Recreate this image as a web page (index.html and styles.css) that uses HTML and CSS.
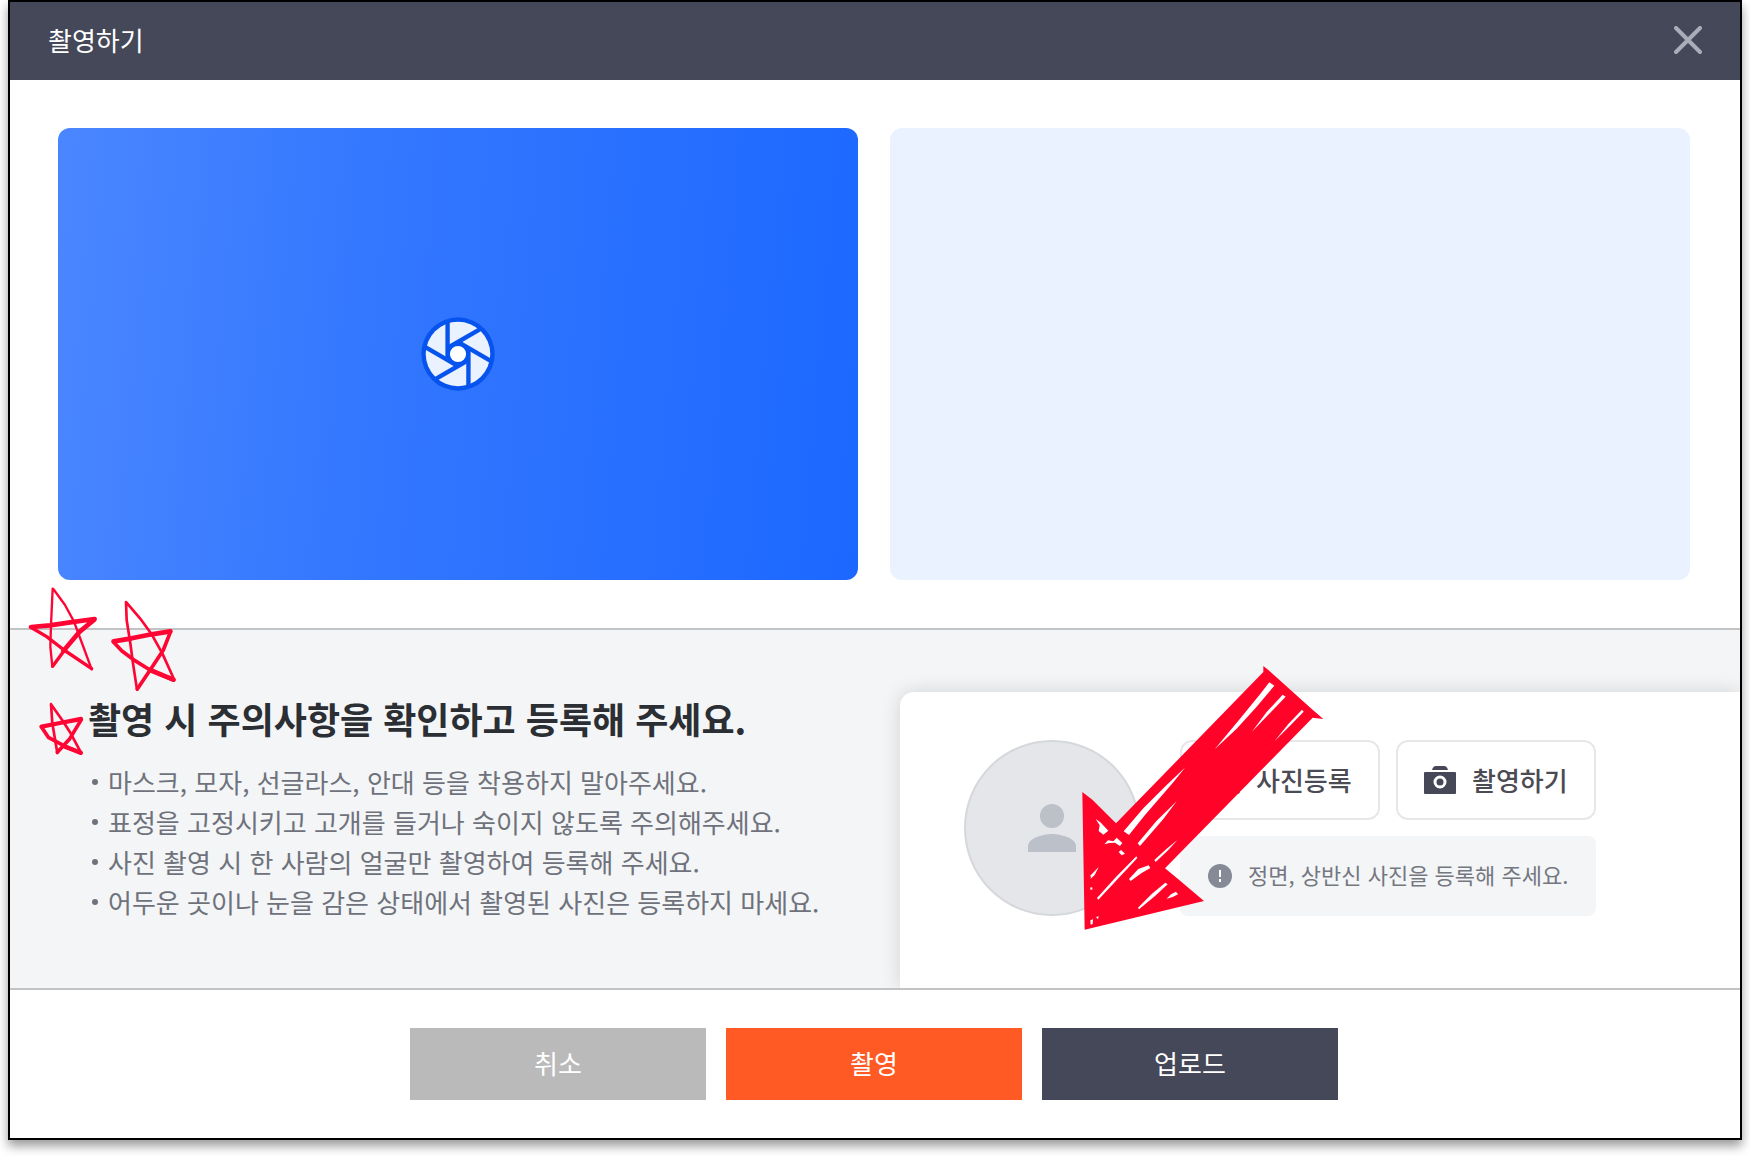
FILE: index.html
```html
<!DOCTYPE html>
<html lang="ko">
<head>
    <meta charset="UTF-8">
    <meta name="viewport" content="width=device-width, initial-scale=1.0">
    <title>촬영하기</title>
    <link rel="stylesheet" href="styles.css">
</head>
<body>
    <div class="modal">
        <header class="modal-header">
            <h1 class="modal-title">촬영하기</h1>
            <button class="close-btn" type="button" aria-label="닫기">
                <svg width="28" height="28" viewBox="0 0 28 28"><path d="M2 2L26 26M26 2L2 26"/></svg>
            </button>
        </header>

        <div class="preview">
            <div class="preview-box camera">
                <svg class="aperture" viewBox="-110 -110 220 220">
                    <circle r="109" fill="#0653ee"/>
                    <circle r="96" fill="#eaf1ff"/>
                    <g stroke="#0653ee" stroke-width="13">
                        <path d="M-31 -97V18"/>
                        <path d="M-31 -97V18" transform="rotate(60)"/>
                        <path d="M-31 -97V18" transform="rotate(120)"/>
                        <path d="M-31 -97V18" transform="rotate(180)"/>
                        <path d="M-31 -97V18" transform="rotate(240)"/>
                        <path d="M-31 -97V18" transform="rotate(300)"/>
                    </g>
                    <circle r="29" fill="#fff" stroke="#0653ee" stroke-width="10"/>
                </svg>
            </div>
            <div class="preview-box result"></div>
        </div>

        <section class="notice">
            <div class="notice-text">
                <h2>촬영 시 주의사항을 확인하고 등록해 주세요.</h2>
                <ul>
                    <li>마스크, 모자, 선글라스, 안대 등을 착용하지 말아주세요.</li>
                    <li>표정을 고정시키고 고개를 들거나 숙이지 않도록 주의해주세요.</li>
                    <li>사진 촬영 시 한 사람의 얼굴만 촬영하여 등록해 주세요.</li>
                    <li>어두운 곳이나 눈을 감은 상태에서 촬영된 사진은 등록하지 마세요.</li>
                </ul>
            </div>

            <div class="card">
                <div class="avatar">
                    <svg width="72" height="72" viewBox="0 0 24 24"><circle cx="12" cy="8" r="4"/><path d="M4 20V18C4 15.3 9.3 14 12 14S20 15.3 20 18V20Z"/></svg>
                </div>
                <div class="card-body">
                    <div class="card-buttons">
                        <button class="outline-btn" type="button">
                            <svg width="32" height="28" viewBox="0 0 32 28"><path fill-rule="evenodd" d="M3 0H29A3 3 0 0 1 32 3V25A3 3 0 0 1 29 28H3A3 3 0 0 1 0 25V3A3 3 0 0 1 3 0ZM5 23H27L20 12L14 19L10 15Z"/></svg>
                            사진등록
                        </button>
                        <button class="outline-btn" type="button">
                            <svg width="32" height="28" viewBox="0 0 32 28"><path d="M8 4Q9 0 12 0H20Q23 0 24 4Z"/><rect y="6" width="32" height="22" rx="1"/><circle cx="16" cy="16" r="5" stroke="#fff" stroke-width="3"/></svg>
                            촬영하기
                        </button>
                    </div>
                    <p class="hint">
                        <svg width="24" height="24" viewBox="0 0 24 24"><circle cx="12" cy="12" r="12" fill="#858a96"/><path d="M12 6V13M12 15V18" stroke="#fff" stroke-width="2"/></svg>
                        <span>정면, 상반신 사진을 등록해 주세요.</span>
                    </p>
                </div>

                <!-- hand-drawn arrow pointing at the shoot button -->
                <svg class="arrow" width="245" height="265" viewBox="60 45 735 795">
                    <path fill="#ff0329" d="M610 48L625 60L756 178L790 207L758 203L315 655L355 688L432 753L74 839L67 426L98 450L168 520L610 66Z"/>
                    <g fill="#fff">
                        <path d="M628 97L643 107L590 170L530 236L464 298L540 206L600 133Z"/>
                        <path d="M668 134L677 140L630 189L575 246L620 186Z"/>
                        <path d="M726 179L731 185L690 227L644 273L685 222Z"/>
                        <path d="M376 352L340 397L255 495L207 555L191 544L250 475L320 405Z"/>
                        <path d="M350 454L310 507L240 588L233 580L290 512Z"/>
                        <path d="M352 570L325 600L287 636L283 630L320 596Z"/>
                        <path d="M107 507L121 517L145 542L130 554L116 543L119 526Z"/>
                        <path d="M133 583L144 571L160 574L170 563L187 579L180 588L165 578L148 579Z"/>
                        <path d="M176 606L183 600L195 611L185 616Z"/>
                        <path d="M229 619L232 624L115 749L111 744L165 684Z"/>
                        <path d="M266 646L271 654L245 669L212 693L207 687L235 657Z"/>
                        <path d="M316 698L323 703L285 738L237 778L234 773L275 732Z"/>
                        <path d="M348 725L354 733L338 741L320 746L333 733Z"/>
                        <path d="M116 651L92 676V686L104 675Z"/>
                        <path d="M91 811L99 808L98 822L92 824ZM108 801L116 799L114 808Z"/>
                        <path d="M91 712L97 712L97 719L91 719Z"/>
                    </g>
                </svg>
            </div>

            <svg class="stars" width="160" height="178" viewBox="72 36 480 534">
                <path stroke-width="7" d="M158 56L153 165L151 230L157 290M160 57L195 105L222 155L248 225L275 298"/>
                <path stroke-width="10" d="M91 171L140 200L192 240L275 296M158 289L190 245"/>
                <path stroke-width="14" d="M94 171L150 166L205 158L284 147M283 149L240 184L190 243"/>
                <path stroke-width="8" d="M378 96L380 150L391 220L399 280L411 359M379 97L420 145L455 193L487 250L523 330"/>
                <path stroke-width="11" d="M340 215L365 242L405 272L450 300L521 330M412 357L452 298L490 240L512 184"/>
                <path stroke-width="14" d="M341 214L395 205L455 193L511 184M450 300L520 329"/>
                <path stroke-width="8" d="M153 402L157 460L172 549M153 403L188 452L212 490L243 548"/>
                <path stroke-width="11" d="M124 470L145 502L190 526L243 549M172 547L208 508L244 449"/>
                <path stroke-width="13" d="M125 470L180 459L243 447M195 530L242 548"/>
            </svg>
        </section>

        <footer class="modal-footer">
            <button class="btn btn-cancel" type="button">취소</button>
            <button class="btn btn-shoot" type="button">촬영</button>
            <button class="btn btn-upload" type="button">업로드</button>
        </footer>
    </div>
</body>
</html>
```
FILE: styles.css
```css
* {
    box-sizing: border-box;
}
body {
    margin: 0;
    padding: 0 8px 16px;
    background-color: #fff;
    color: #2b2e33;
    font-family: 'Noto Sans CJK KR', sans-serif;
    font-size: 26px;
    line-height: 40px;
}
button {
    font: inherit;
    cursor: pointer;
}
.modal {
    border: 2px solid #000;
    background-color: #fff;
    box-shadow: 0 6px 10px rgba(0, 0, 0, 0.4);
}
.modal-header {
    display: flex;
    justify-content: space-between;
    align-items: center;
    height: 78px;
    padding: 0 38px 2px;
    background-color: #454858;
}
.modal-title {
    margin: 0;
    color: #fff;
    font-size: 26px;
    font-weight: 400;
}
.close-btn {
    display: flex;
    padding: 0;
    border: none;
    background: none;
}
.close-btn svg {
    fill: none;
    stroke: #a9adba;
    stroke-width: 4;
    stroke-linecap: round;
}
.preview {
    display: grid;
    grid-template-columns: 1fr 1fr;
    gap: 32px;
    padding: 48px 50px 48px 48px;
}
.preview-box {
    display: flex;
    justify-content: center;
    align-items: center;
    aspect-ratio: 800 / 452;
    border-radius: 12px;
}
.camera {
    background: linear-gradient(95deg, #4a86ff, #3377ff 40%, #1c68ff);
}
.result {
    background-color: #eaf1ff;
}
.aperture {
    width: 74px;
    height: 74px;
}
.notice {
    position: relative;
    display: grid;
    grid-template-columns: 89fr 84fr;
    border-top: 2px solid #c2c3c5;
    background-color: #f3f5f7;
}
.notice-text {
    padding: 62px 0 66px 78px;
}
.notice-text h2 {
    margin: 0 0 18px;
    font-size: 36px;
    font-weight: 700;
    line-height: 52px;
}
.notice-text ul {
    margin: 0;
    padding: 0;
    list-style: none;
    color: #6f727b;
}
.notice-text li {
    display: flex;
    align-items: center;
    gap: 10px;
}
.notice-text li::before {
    content: '';
    width: 6px;
    height: 6px;
    margin-left: 4px;
    border-radius: 50%;
    background-color: #6f727b;
}
.card {
    position: relative;
    display: flex;
    align-items: flex-start;
    gap: 40px;
    margin-top: 62px;
    padding: 48px 64px;
    border-radius: 14px 0 0 0;
    background-color: #fff;
    box-shadow: 0 0 20px rgba(0, 0, 0, 0.14);
    clip-path: inset(-40px 0 0 -40px);
}
.avatar {
    display: flex;
    justify-content: center;
    align-items: center;
    flex: none;
    width: 176px;
    height: 176px;
    border: 2px solid #d5d7da;
    border-radius: 50%;
    background-color: #e4e6e9;
}
.avatar svg {
    fill: #bcc0c8;
}
.card-body {
    display: grid;
    gap: 16px;
}
.card-buttons {
    display: grid;
    grid-template-columns: 200px 200px;
    gap: 16px;
}
.outline-btn {
    display: flex;
    align-items: center;
    gap: 16px;
    height: 80px;
    padding: 0 26px;
    border: 2px solid #e6e7e9;
    border-radius: 12px;
    background-color: #fff;
    color: #4a4b53;
    font-weight: 500;
    white-space: nowrap;
}
.outline-btn svg {
    flex: none;
    fill: #464857;
}
.hint {
    display: flex;
    align-items: center;
    gap: 16px;
    height: 80px;
    margin: 0;
    padding: 0 28px;
    border-radius: 8px;
    background-color: #f3f5f7;
    color: #74777f;
    font-size: 22px;
    white-space: nowrap;
}
.hint span {
    padding-bottom: 4px;
}
.arrow {
    position: absolute;
    left: 180px;
    top: -27px;
}
.stars {
    position: absolute;
    left: 14px;
    top: -48px;
    fill: none;
    stroke: #ff0533;
    stroke-linecap: round;
    stroke-linejoin: round;
}
.modal-footer {
    display: flex;
    justify-content: center;
    gap: 20px;
    padding: 38px 2px 38px 0;
    border-top: 2px solid #c2c3c5;
}
.btn {
    width: 296px;
    height: 72px;
    padding: 0 0 2px;
    border: none;
    color: #fff;
}
.btn-cancel {
    background-color: #bababa;
}
.btn-shoot {
    background-color: #ff5a24;
}
.btn-upload {
    background-color: #454858;
}
```
